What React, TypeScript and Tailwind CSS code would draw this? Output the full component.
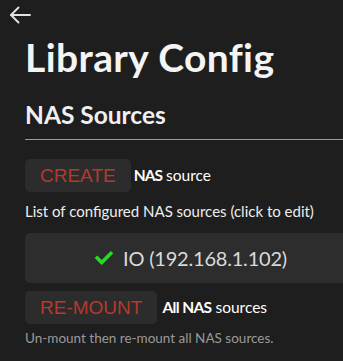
import React from 'react';
import { FaCheck } from 'react-icons/fa';

type Source = { name: string; ip: string; mounted: boolean };

const SOURCES: Source[] = [{ name: 'IO', ip: '192.168.1.102', mounted: true }];

const ActionButton: React.FC<{ label: string }> = ({ label }) => (
  <button className="h-[33px] px-[15px] rounded-[5px] bg-[#2c2c2c] text-[#b6392c] text-[19px] leading-none font-['Liberation_Sans',Arial,sans-serif]">
    {label}
  </button>
);

export default function App() {
  return (
    <div className="min-h-screen w-full bg-[#1e1e1e] text-white font-['Lato','Noto_Sans',sans-serif] overflow-hidden">
      <div className="pl-[9px] pt-[6px]">
        {/* back arrow */}
        <svg width="22" height="18" viewBox="0 0 22 18" fill="none" stroke="#e2e2e2" strokeWidth="1.9" strokeLinecap="round" strokeLinejoin="round">
          <path d="M21 9H2" />
          <path d="M9.5 1.5L2 9l7.5 7.5" />
        </svg>
      </div>

      <div className="pl-[25px]">
        <h1 className="mt-[11px] text-[39px] font-bold leading-[44px] tracking-[0.01em] text-[#f4f4f4]">Library Config</h1>

        <h2 className="mt-[22px] text-[24.5px] font-bold leading-[28px] text-[#f0f0f0]">NAS Sources</h2>
        <hr className="mt-[10px] border-t border-[#9a9a9a]" />

        <div className="mt-[19px] flex items-center gap-[3px]">
          <ActionButton label="CREATE" />
          <span className="text-[15.5px] text-white">
            <span className="font-bold tracking-[-0.06em]">NAS</span> source
          </span>
        </div>

        <p className="mt-[10px] text-[15px] leading-[18px] text-[#ededed]">
          List of configured NAS sources (click to edit)
        </p>

        <div className="mt-[13px] w-[332px] flex flex-col gap-2">
          {SOURCES.map((s) => (
            <button
              key={s.name}
              className="h-[50px] w-full rounded-[5px] bg-[#2d2d2d] flex items-center justify-center gap-[10px] text-[20px] text-[#dadada]"
            >
              {s.mounted && <FaCheck size={18} className="text-[#1ee01e]" />}
              <span className="tracking-[-0.01em]">
                {s.name} ({s.ip})
              </span>
            </button>
          ))}
        </div>

        <div className="mt-[8px] flex items-center gap-[5px]">
          <ActionButton label="RE-MOUNT" />
          <span className="text-[15.5px] text-white">
            <span className="font-bold tracking-[-0.04em]">All NAS</span> sources
          </span>
        </div>

        <p className="mt-[5px] text-[13.5px] leading-[18px] text-[#9a9a9a]">
          Un-mount then re-mount all NAS sources.
        </p>
      </div>
    </div>
  );
}
